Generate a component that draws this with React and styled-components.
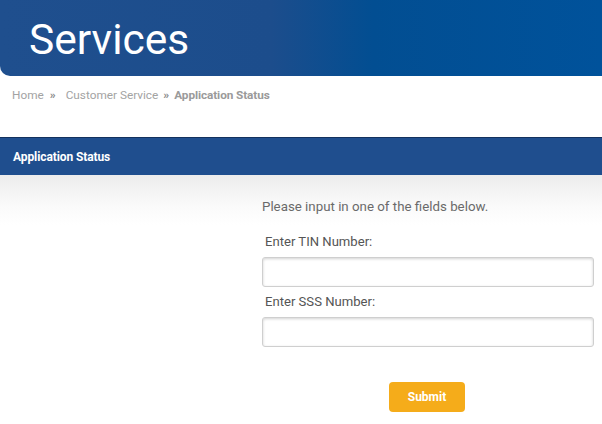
import React from "react";
import styled, { createGlobalStyle } from "styled-components";

const Global = createGlobalStyle`
  html, body { margin: 0; padding: 0; background: #fff; }
  body { font-family: Roboto, "Liberation Sans", sans-serif; overflow: hidden; }
`;

const Page = styled.div`
  width: 602px;
  height: 424px;
  overflow: hidden;
  background: #fff;
`;

const Banner = styled.header`
  height: 76px;
  background: linear-gradient(90deg, #1f4f8e 0%, #1c4d8c 45%, #024e92 62%, #00529b 100%);
  border-bottom-left-radius: 10px;
  display: flex;
  align-items: center;
  padding-left: 29px;
  box-sizing: border-box;
`;

const Title = styled.h1`
  margin: 0;
  margin-top: 2px;
  font-family: Roboto, sans-serif;
  font-weight: 400;
  font-size: 42.5px;
  color: #fff;
`;

const Crumbs = styled.nav`
  display: flex;
  align-items: center;
  height: 38px;
  padding-left: 12px;
  font-size: 11.8px;
  color: #a0a0a0;
`;

const Crumb = styled.span`
  font-weight: ${(p) => (p.$current ? 700 : 400)};
  color: ${(p) => (p.$current ? "#9a9a9a" : "#a3a3a3")};
  letter-spacing: ${(p) => (p.$current ? "-0.1px" : "0")};
`;

const Sep = styled.span`
  font-weight: 700;
  color: #8a8a8a;
  margin: ${(p) => p.$m || "0 5px"};
`;

const SectionBar = styled.div`
  margin-top: 23px;
  height: 38px;
  background: #1f4e8e;
  border-top: 1px solid #13325e;
  box-sizing: border-box;
  display: flex;
  align-items: center;
  padding-left: 13px;
  color: #fff;
  font-size: 12px;
  font-weight: 700;
  letter-spacing: -0.1px;
`;

const Body = styled.div`
  background: linear-gradient(180deg, #ececec 0%, #fafafa 60%, #ffffff 100%) no-repeat;
  background-size: 100% 50px;
  display: grid;
  grid-template-columns: 262px 332px;
  padding-top: 24px;
`;

const Form = styled.form`
  grid-column: 2;
  display: flex;
  flex-direction: column;
`;

const Intro = styled.p`
  margin: 0 0 19px 0;
  font-size: 13.3px;
  color: #6a6a6a;
  line-height: 16px;
`;

const Label = styled.label`
  font-size: 13.1px;
  color: #555;
  padding-left: 3px;
  line-height: 16px;
  margin-bottom: 7px;
`;

const Input = styled.input`
  width: 332px;
  height: 30px;
  box-sizing: border-box;
  border: 1px solid #cfcfcf;
  border-radius: 3px;
  box-shadow: inset 0 1px 3px rgba(0, 0, 0, 0.18);
  margin-bottom: ${(p) => p.$mb || "7px"};
  background: #fff;
  outline: none;
`;

const ButtonRow = styled.div`
  display: flex;
  justify-content: center;
  padding-right: 2px;
`;

const Submit = styled.button`
  width: 76px;
  height: 30px;
  border: none;
  border-radius: 4px;
  background: #f5ac1a;
  color: #fff;
  font-family: Roboto, sans-serif;
  font-weight: 700;
  font-size: 12px;
  cursor: pointer;
`;

export default function App() {
  return (
    <Page>
      <Global />
      <Banner>
        <Title>Services</Title>
      </Banner>
      <Crumbs>
        <Crumb>Home</Crumb>
        <Sep $m="0 10px 0 6px">»</Sep>
        <Crumb>Customer Service</Crumb>
        <Sep>»</Sep>
        <Crumb $current>Application Status</Crumb>
      </Crumbs>
      <SectionBar>Application Status</SectionBar>
      <Body>
        <Form onSubmit={(e) => e.preventDefault()}>
          <Intro>Please input in one of the fields below.</Intro>
          <Label>Enter TIN Number:</Label>
          <Input type="text" />
          <Label>Enter SSS Number:</Label>
          <Input type="text" $mb="35px" />
          <ButtonRow>
            <Submit type="submit">Submit</Submit>
          </ButtonRow>
        </Form>
      </Body>
    </Page>
  );
}
